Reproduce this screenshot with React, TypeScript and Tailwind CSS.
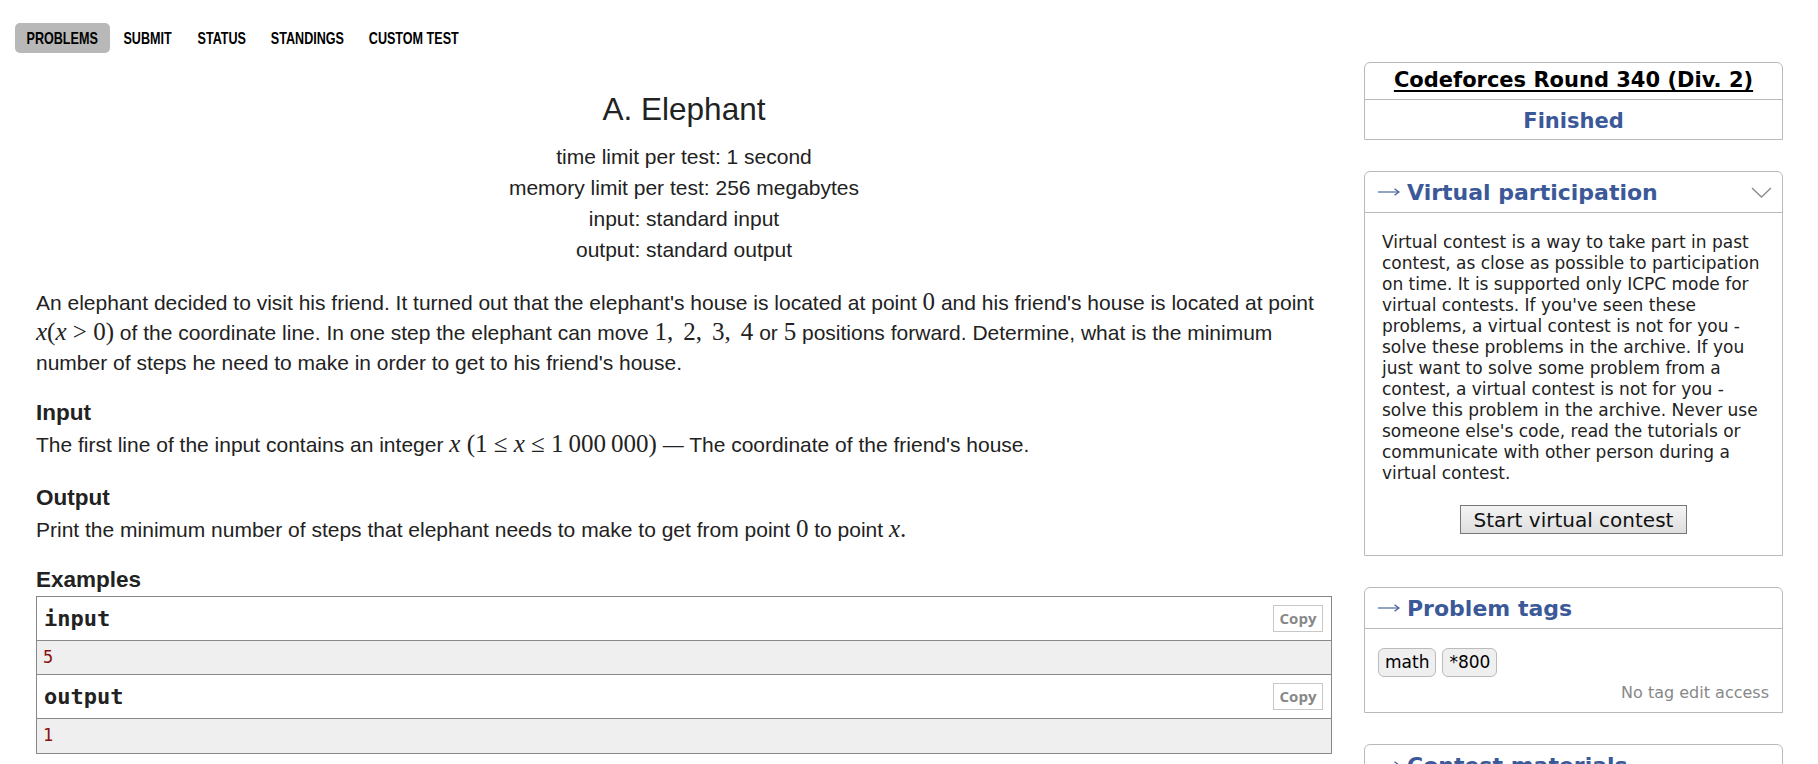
import React from 'react'

const navItems = [
  { label: 'PROBLEMS', w: 'w-[95px]' },
  { label: 'SUBMIT', w: 'w-[75px]' },
  { label: 'STATUS', w: 'w-[73px]' },
  { label: 'STANDINGS', w: 'w-[98px]' },
  { label: 'CUSTOM TEST', w: 'w-[115px]' },
]

function M({ children }: { children: React.ReactNode }) {
  // inline math, rendered like MathJax (serif, a bit larger)
  return <span className="font-['Liberation_Serif',serif] text-[25px] leading-none">{children}</span>
}

function I({ children }: { children: React.ReactNode }) {
  return <i className="italic">{children}</i>
}

// MathJax-style spacing inside formulas
function Sp() {
  return <span className="inline-block w-[10px]" />
}

function Thin() {
  return <span className="inline-block w-[5px]" />
}

function Arrow() {
  return (
    <svg width="22" height="10" viewBox="0 0 22 10" className="shrink-0">
      <path d="M0 5 H20.5" stroke="#3b5998" strokeWidth="1.1" />
      <path d="M16.5 1.8 L21 5 L16.5 8.2" fill="none" stroke="#3b5998" strokeWidth="1.1" />
    </svg>
  )
}

function SideHeader({ title, chevron }: { title: string; chevron?: boolean }) {
  return (
    <div className="flex items-center h-[41px] pl-[13px] pr-[10px] border-b border-[#b9b9b9]">
      <Arrow />
      <span className="ml-[7px] text-[#3b5998] text-[22px] font-bold">{title}</span>
      {chevron && (
        <svg className="ml-auto" width="21" height="11" viewBox="0 0 21 11">
          <path d="M1 1 L10.5 10 L20 1" fill="none" stroke="#888" strokeWidth="1.3" />
        </svg>
      )}
    </div>
  )
}

function ExampleBlock({ label, value, last }: { label: string; value: string; last?: boolean }) {
  return (
    <>
      <div className="relative h-[44px] bg-white border-b border-[#888] flex items-center pl-[7px]">
        <span className="font-['DejaVu_Sans_Mono',monospace] font-bold text-[22px] text-[#222]">{label}</span>
        <button className="absolute right-[8px] top-[8px] h-[27px] w-[50px] border border-[#c8c8c8] bg-white text-[#888] font-['Open_Sans',sans-serif] font-bold text-[15px] leading-none">
          Copy
        </button>
      </div>
      <div className={`h-[34px] bg-[#efefef] flex items-center pl-[6px] ${last ? '' : 'border-b border-[#888]'}`}>
        <span className="font-['DejaVu_Sans_Mono',monospace] text-[17px] text-[#8b1010]">{value}</span>
      </div>
    </>
  )
}

export default function App() {
  return (
    <div className="w-[1818px] h-[764px] overflow-hidden bg-white text-[#222]">
      {/* Top menu */}
      <div className="flex pt-[23px] pl-[15px] h-[53px]">
        {navItems.map((item, i) => (
          <div
            key={item.label}
            className={`${item.w} h-[30px] pt-[2px] flex items-center justify-center rounded-[5px] font-['Liberation_Sans',Arial,sans-serif] font-bold text-[17px] text-black whitespace-nowrap ${
              i === 0 ? 'bg-[#b8b8b8]' : ''
            }`}
          >
            <span className="inline-block scale-x-[0.74]">{item.label}</span>
          </div>
        ))}
      </div>

      <div className="flex items-start gap-[32px] pl-[36px] pt-[9px]">
        {/* Problem statement */}
        <div className="w-[1296px] shrink-0 font-['Liberation_Sans',Arial,sans-serif]">
          <div className="text-center">
            <h1 className="mt-[27px] text-[31.5px] leading-[40px] font-normal">A. Elephant</h1>
            <div className="mt-[12px] text-[21px] leading-[31px]">
              <div>time limit per test: 1 second</div>
              <div>memory limit per test: 256 megabytes</div>
              <div>input: standard input</div>
              <div>output: standard output</div>
            </div>
          </div>

          <p className="mt-[23px] text-[21px] leading-[30px]">
            An elephant decided to visit his friend. It turned out that the elephant's house is located at
            point <M>0</M> and his friend's house is located at point{' '}
            <M>
              <I>x</I>(<I>x</I>{'\u2005>\u2005'}0)
            </M>{' '}
            of the coordinate line. In one step the elephant can move{' '}
            <M>
              1,<Sp />2,<Sp />3,<Sp />4
            </M>{' '}
            or <M>5</M> positions forward. Determine, what is the minimum number of steps he need to make in order
            to get to his friend's house.
          </p>

          <div className="mt-[21px] text-[22.5px] leading-[28px] font-bold">Input</div>
          <p className="mt-[3px] text-[21px] leading-[30px]">
            The first line of the input contains an integer{' '}
            <M>
              <I>x</I> (1{'\u2005≤\u2005'}
              <I>x</I>
              {'\u2005≤\u2005'}1<Thin />000<Thin />000)
            </M>{' '}
            — The coordinate of the friend's house.
          </p>

          <div className="mt-[24px] text-[22.5px] leading-[28px] font-bold">Output</div>
          <p className="mt-[3px] text-[21px] leading-[30px]">
            Print the minimum number of steps that elephant needs to make to get from point <M>0</M> to point{' '}
            <M>
              <I>x</I>.
            </M>
          </p>

          <div className="mt-[21px] text-[22.5px] leading-[28px] font-bold">Examples</div>
          <div className="mt-[2px] border border-[#888]">
            <ExampleBlock label="input" value="5" />
            <ExampleBlock label="output" value="1" last />
          </div>
        </div>

        {/* Sidebar */}
        <div className="w-[419px] shrink-0 font-['DejaVu_Sans',Verdana,sans-serif] text-[#222]">
          <div className="border border-[#b9b9b9] rounded-t-[6px]">
            <div className="h-[37px] flex items-center justify-center border-b border-[#b9b9b9]">
              <span className="text-[21px] font-bold text-black underline underline-offset-[3px]">
                Codeforces Round 340 (Div. 2)
              </span>
            </div>
            <div className="h-[39px] pt-[4px] flex items-center justify-center">
              <span className="text-[21px] font-bold text-[#3b5998]">Finished</span>
            </div>
          </div>

          <div className="mt-[31px] border border-[#b9b9b9] rounded-t-[6px]">
            <SideHeader title="Virtual participation" chevron />
            <div className="pt-[19px] pb-[21px] px-[17px]">
              <p className="text-[17px] leading-[21px]">
                Virtual contest is a way to take part in past contest, as close as possible to participation on
                time. It is supported only ICPC mode for virtual contests. If you've seen these problems, a virtual
                contest is not for you - solve these problems in the archive. If you just want to solve some
                problem from a contest, a virtual contest is not for you - solve this problem in the archive.
                Never use someone else's code, read the tutorials or communicate with other person during a
                virtual contest.
              </p>
              <div className="mt-[21px] flex justify-center">
                <button className="h-[29px] w-[227px] border border-[#777] bg-gradient-to-b from-[#f4f4f4] to-[#dedede] text-[20px] leading-none text-[#111]">
                  Start virtual contest
                </button>
              </div>
            </div>
          </div>

          <div className="mt-[31px] border border-[#b9b9b9] rounded-t-[6px]">
            <SideHeader title="Problem tags" />
            <div className="pt-[19px] pb-[9px] px-[13px]">
              <div className="flex gap-[6px]">
                <span className="h-[29px] px-[6px] flex items-center bg-[#efefef] border border-[#bbb] rounded-[6px] text-[17px] text-black">
                  math
                </span>
                <span className="h-[29px] px-[6px] flex items-center bg-[#efefef] border border-[#bbb] rounded-[6px] text-[17px] text-black">
                  *800
                </span>
              </div>
              <div className="mt-[5px] text-right text-[16px] leading-[21px] text-[#888]">No tag edit access</div>
            </div>
          </div>

          <div className="mt-[31px] border border-[#b9b9b9] rounded-t-[6px]">
            <SideHeader title="Contest materials" />
          </div>
        </div>
      </div>
    </div>
  )
}
